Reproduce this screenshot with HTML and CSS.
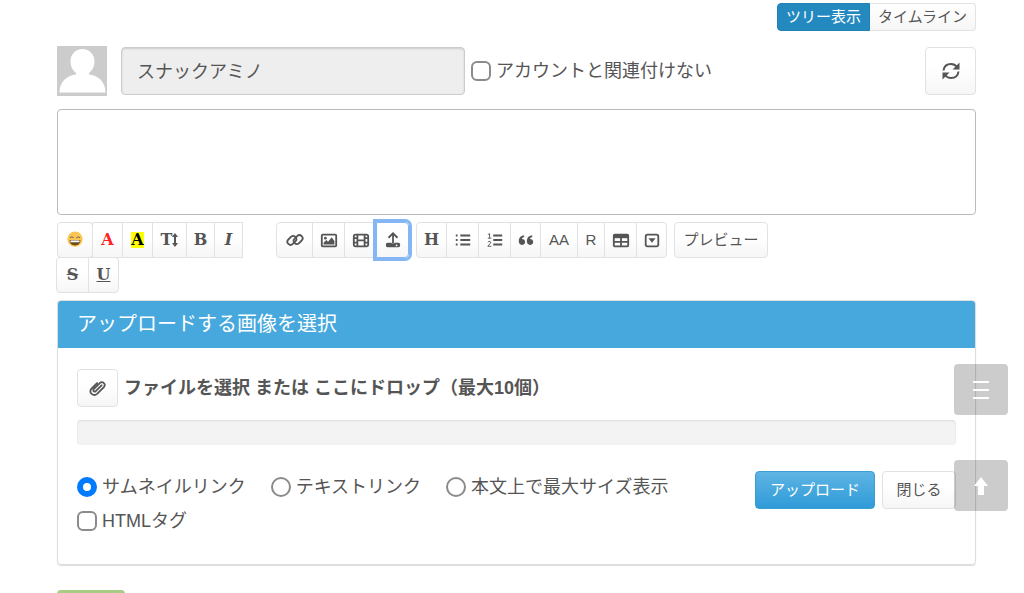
FILE: index.html
```html
<!DOCTYPE html>
<html lang="ja">
<head>
    <meta charset="UTF-8">
    <meta name="viewport" content="width=device-width, initial-scale=1.0">
    <title>コメント</title>
    <link rel="stylesheet" href="styles.css">
</head>
<body>
    <div class="view-switch">
        <button type="button" class="active">ツリー表示</button>
        <button type="button">タイムライン</button>
    </div>

    <form class="comment-form">
        <div class="user-row">
            <svg class="avatar" viewBox="0 0 50 50" aria-hidden="true">
                <path fill="#fff" d="M25.500 3c7 0 12 5.500 12 12.500 0 5-2 9-5.500 11.500v1.500c9 1 16.500 7 16.500 18H2.500c0-11 7.500-17 16.500-18V27c-3.500-2.500-5.500-6.500-5.500-11.500C13.500 8.500 18.500 3 25.500 3z"/>
            </svg>
            <input type="text" class="user-name" aria-label="名前" value="スナックアミノ" disabled>
            <label class="choice"><input type="checkbox"> アカウントと関連付けない</label>
            <button type="button" class="btn refresh" aria-label="更新">
                <svg class="icon" viewBox="0 0 20 20">
                    <path class="line" d="M2.500 9.500C3 5.500 6 3 10 3c2.500 0 4.500 1 6 3M17.500 10.500C17 14.500 14 17 10 17c-2.500 0-4.500-1-6-3"/>
                    <path d="M18.500 1.500v7h-7zM1.500 18.500v-7h7z"/>
                </svg>
            </button>
        </div>

        <textarea class="message" aria-label="本文"></textarea>

        <div class="toolbar">
            <div class="format">
                <button type="button" class="btn emoji" aria-label="絵文字">
                    <svg class="icon" viewBox="0 0 20 20">
                        <circle cx="10" cy="9" r="8.500" fill="#fbc552"/>
                        <path class="thin" stroke="#6b4a1c" d="M4.500 7.500q2-2 4 0M11.500 7.500q2-2 4 0"/>
                        <path fill="#6b4a1c" d="M4 10h12c0 4-2.500 6-6 6s-6-2-6-6z"/>
                        <path fill="#fff" d="M5 10.500h10v2H5z"/>
                    </svg>
                </button>
                <button type="button" class="btn letter red">A</button>
                <button type="button" class="btn letter black"><span class="marker">A</span></button>
                <button type="button" class="btn letter size">T<svg viewBox="0 0 6 14" aria-hidden="true"><path d="M3 0l3 4H4v6h2l-3 4-3-4h2V4H0z"/></svg></button>
                <button type="button" class="btn letter slim">B</button>
                <button type="button" class="btn letter slim italic">I</button>
                <button type="button" class="btn letter strike">S</button>
                <button type="button" class="btn letter underline">U</button>
            </div>

            <div class="group">
                <button type="button" class="btn link" aria-label="リンク">
                    <svg class="icon" viewBox="0 0 20 20">
                        <rect class="line" x="1" y="7" width="11" height="7" rx="3.500" transform="rotate(-45 6.500 10.500)"/>
                        <rect class="line" x="8" y="6" width="11" height="7" rx="3.500" transform="rotate(-45 13.500 9.500)"/>
                    </svg>
                </button>
                <button type="button" class="btn" aria-label="画像">
                    <svg class="icon" viewBox="0 0 20 20">
                        <rect class="line" x="2" y="4" width="16" height="13" rx="1"/>
                        <circle cx="6" cy="8" r="1.500"/>
                        <path d="M4 15v-2l3-3 2 2 4-5 3 4v4z"/>
                    </svg>
                </button>
                <button type="button" class="btn" aria-label="動画">
                    <svg class="icon" viewBox="0 0 20 20">
                        <rect class="line" x="2" y="4" width="16" height="13" rx="2"/>
                        <path class="line" d="M6 4v13M14 4v13M6 10.500h8M2 8h4M2 13h4M14 8h4M14 13h4"/>
                    </svg>
                </button>
                <button type="button" class="btn focused" aria-label="アップロード">
                    <svg class="icon" viewBox="0 0 20 20">
                        <path class="line" d="M10 14V3M5 7.500l5-5 5 5"/>
                        <path fill-rule="evenodd" d="M4 13h4q2 2 4 0h4q2 0 2 2.500T16 18H4q-2 0-2-2.500T4 13zM14 15a1 1 0 1 0 1 1 1 1 0 0 0-1-1z"/>
                    </svg>
                </button>
            </div>

            <div class="group">
                <button type="button" class="btn letter">H</button>
                <button type="button" class="btn" aria-label="箇条書き">
                    <svg class="icon" viewBox="0 0 20 20">
                        <path class="line" d="M7 5h11M7 10h11M7 15h11M2 5h2M2 10h2M2 15h2"/>
                    </svg>
                </button>
                <button type="button" class="btn" aria-label="番号付きリスト">
                    <svg class="icon" viewBox="0 0 20 20">
                        <path class="line" d="M8 5h10M8 10h10M8 15h10"/>
                        <path class="thin" d="M2 4l2-1v5M2 8h4M2 12.500q1-1.500 2.500-1t0 2.500L2 17h4"/>
                    </svg>
                </button>
                <button type="button" class="btn quote" aria-label="引用">
                    <svg class="icon" viewBox="0 0 20 20">
                        <path d="M8 5C4 5 2 7.500 2 11.500 2 14 3.500 15.500 5.500 15.500s3.500-1.500 3.500-3.300S7.500 9 5.500 9C5.500 7.500 6.500 7 8 7zM17 5c-4 0-6 2.500-6 6.500 0 2.500 1.500 4 3.500 4s3.500-1.500 3.500-3.300S16.500 9 14.500 9c0-1.500 1-2 2.500-2z"/>
                    </svg>
                </button>
                <button type="button" class="btn text wide">AA</button>
                <button type="button" class="btn text narrow">R</button>
                <button type="button" class="btn" aria-label="表">
                    <svg class="icon" viewBox="0 0 20 20">
                        <rect class="line" x="2" y="4" width="16" height="13" rx="1"/>
                        <path d="M2 4h16v4H2z"/>
                        <path class="line" d="M10 7v10M2 12h16"/>
                    </svg>
                </button>
                <button type="button" class="btn fold" aria-label="折りたたみ">
                    <svg class="icon" viewBox="0 0 20 20">
                        <rect class="line" x="3" y="4" width="14" height="13" rx="2"/>
                        <path d="M6 8h8l-4 5z"/>
                    </svg>
                </button>
            </div>

            <button type="button" class="btn preview">プレビュー</button>
        </div>

        <section class="panel">
            <h2>アップロードする画像を選択</h2>
            <div class="panel-body">
                <div class="picker">
                    <button type="button" class="btn attach" aria-label="ファイルを選択">
                        <svg class="icon" viewBox="0 0 20 20">
                            <path class="clip" d="M14 7l-6.500 6.500q-1.500 1-2.300 0t0-2.200L12 4.500q2.500-2 4.500 0t0 4.500L9 16.500q-3 2.500-6 0t0-6L9 4.500"/>
                        </svg>
                    </button>
                    <strong>ファイルを選択 または ここにドロップ（最大10個）</strong>
                </div>
                <div class="progress"></div>
                <div class="options">
                    <div class="choices">
                        <label class="choice"><input type="radio" name="style" checked> サムネイルリンク</label>
                        <label class="choice"><input type="radio" name="style"> テキストリンク</label>
                        <label class="choice"><input type="radio" name="style"> 本文上で最大サイズ表示</label>
                        <label class="choice"><input type="checkbox"> HTMLタグ</label>
                    </div>
                    <div class="actions">
                        <button type="button" class="btn primary">アップロード</button>
                        <button type="button" class="btn">閉じる</button>
                    </div>
                </div>
            </div>
        </section>

        <div class="submit-bar"></div>
    </form>

    <div class="floating">
        <button type="button" aria-label="メニュー">
            <svg class="icon" viewBox="0 0 20 20"><path class="line" d="M2 2h16M2 10h16M2 18h16"/></svg>
        </button>
        <button type="button" aria-label="上へ">
            <svg class="icon" viewBox="0 0 20 20"><path d="M10 1l7 9h-4v9H7v-9H3z"/></svg>
        </button>
    </div>
</body>
</html>
```

FILE: styles.css
```css
* {
    box-sizing: border-box;
}
body {
    margin: 0;
    padding: 3px 48px 0 57px;
    background-color: #fff;
    color: #555;
    font-family: "Liberation Sans", "Noto Sans CJK JP", sans-serif;
    font-size: 18px;
    line-height: 24px;
}
button, input, textarea {
    margin: 0;
    font-family: inherit;
    color: inherit;
}
.icon {
    display: block;
    width: 18px;
    height: 18px;
    fill: currentColor;
}
.line {
    fill: none;
    stroke: currentColor;
    stroke-width: 2px;
}
.thin, .clip {
    fill: none;
    stroke: #555;
    stroke-width: 1px;
}
.clip {
    stroke-width: 2px;
    stroke-linecap: round;
}

/* view switch */
.view-switch {
    display: flex;
    justify-content: flex-end;
}
.view-switch button {
    height: 28px;
    padding: 0 8px;
    border: 1px solid #e3e3e3;
    border-left: none;
    border-radius: 0 4px 4px 0;
    background: linear-gradient(#fff, #f6f6f6);
    font-size: 15px;
    line-height: 24px;
}
.view-switch .active {
    border: 1px solid #1f83b8;
    border-radius: 4px 0 0 4px;
    background: #2489bf;
    color: #fff;
}

/* name, checkbox, refresh */
.user-row {
    display: flex;
    align-items: center;
    margin: 15px 0 13px;
}
.avatar {
    width: 50px;
    height: 50px;
    margin-right: 14px;
    background-color: #ccc;
}
.user-name {
    width: 344px;
    height: 48px;
    margin-right: 6px;
    padding: 0 15px 2px;
    border: 1px solid #ccc;
    border-radius: 4px;
    background-color: #eee;
    box-shadow: inset 0 1px 2px #ccc;
    font-size: 18px;
}
.choice {
    display: flex;
    align-items: center;
    gap: 5px;
    white-space: nowrap;
}
.choice input {
    appearance: none;
    width: 20px;
    height: 20px;
    border: 2px solid #8b8b8b;
    border-radius: 6px;
    background-color: #fff;
}
.choice input[type="radio"] {
    border-radius: 50%;
}
.choice input[type="radio"]:checked {
    border: 6px solid #007aff;
}
.message {
    display: block;
    width: 100%;
    height: 106px;
    border: 1px solid #bbb;
    border-radius: 4px;
    resize: none;
}

/* buttons */
.btn {
    display: flex;
    align-items: center;
    justify-content: center;
    width: 33px;
    height: 36px;
    padding: 0;
    border: 1px solid #e2e2e2;
    background: linear-gradient(#fff 40%, #f6f6f6);
    line-height: 24px;
}
.refresh {
    width: 51px;
    height: 48px;
    margin-left: auto;
    border-radius: 4px;
}
.refresh .icon, .floating .icon {
    width: 20px;
    height: 20px;
}

/* toolbar */
.toolbar {
    display: flex;
    align-items: flex-start;
    gap: 7px;
    margin: 7px 0;
}
.format {
    display: flex;
    flex-wrap: wrap;
    width: 212px;
}
.format .btn + .btn, .group .btn + .btn {
    margin-left: -1px;
}
.format .btn:nth-child(n + 7) {
    margin-top: -1px;
}
.group {
    display: flex;
}
.group .btn:first-child, .strike {
    border-radius: 4px 0 0 4px;
}
.group .btn:last-child, .underline {
    border-radius: 0 4px 4px 0;
}
.letter {
    width: 31px;
    font-family: "DejaVu Serif", serif;
    font-size: 16px;
    font-weight: bold;
}
.black {
    color: #000;
}
.red {
    color: #f22;
}
.marker {
    background-color: #ff0;
    line-height: 16px;
}
.emoji {
    width: 36px;
    border-radius: 4px;
}
.size {
    width: 35px;
}
.size svg {
    width: 6px;
    height: 14px;
    fill: currentColor;
}
.slim {
    width: 29px;
}
.italic {
    font-style: italic;
}
.strike {
    width: 33px;
    text-decoration: line-through;
}
.underline {
    text-decoration: underline;
}
.link {
    width: 37px;
}
.quote, .fold {
    width: 31px;
}
.text {
    font-size: 15px;
}
.wide {
    width: 38px;
}
.narrow {
    width: 28px;
}
.focused {
    z-index: 1;
    border-color: #84b6f4;
    box-shadow: 0 0 0 3px #84b6f4;
}
.preview {
    width: 94px;
    border-radius: 4px;
    font-size: 15px;
}

/* upload panel */
.panel {
    border: 1px solid #ddd;
    border-radius: 4px;
    box-shadow: 0 1px 1px #ddd;
}
.panel h2 {
    margin: 0;
    padding: 11px 19px 12px;
    border-radius: 3px 3px 0 0;
    background-color: #46a8dd;
    color: #fff;
    font-size: 20px;
    font-weight: normal;
    line-height: 24px;
}
.panel-body {
    padding: 21px 19px 31px;
}
.picker {
    display: flex;
    align-items: center;
    gap: 6px;
}
.attach {
    width: 41px;
    height: 38px;
    border-radius: 4px;
}
.progress {
    height: 25px;
    margin: 13px 0 26px;
    border-radius: 4px;
    background-color: #f3f3f3;
    box-shadow: inset 0 1px 2px #ddd;
}
.options {
    display: flex;
    justify-content: space-between;
}
.choices {
    display: flex;
    flex-wrap: wrap;
    gap: 10px 25px;
    max-width: 640px;
    padding-top: 4px;
}
.actions {
    display: flex;
    gap: 7px;
}
.actions .btn {
    width: 74px;
    height: 38px;
    border-radius: 4px;
    font-size: 15px;
}
.actions .primary {
    width: 120px;
    border-color: #3a9dd4;
    background: linear-gradient(#5fb4e3, #2f9bd8);
    color: #fff;
}
.submit-bar {
    width: 68px;
    height: 36px;
    margin-top: 25px;
    border-radius: 4px;
    background-color: #a9cc85;
}

/* menu and back-to-top */
.floating {
    position: fixed;
    right: 16px;
    bottom: 82px;
    display: grid;
    gap: 45px;
}
.floating button {
    display: grid;
    place-items: center;
    width: 54px;
    height: 51px;
    border: none;
    border-radius: 4px;
    background-color: rgba(0, 0, 0, 0.2);
    color: #fff;
}
```
